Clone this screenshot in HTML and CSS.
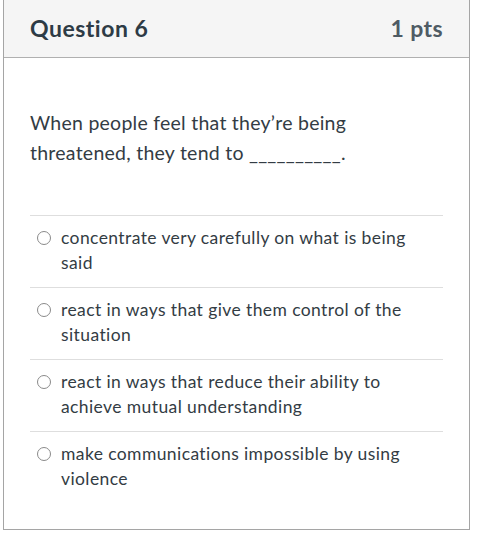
FILE: index.html
```html
<!DOCTYPE html>
<html>
<head>
<meta charset="utf-8">
<link rel="stylesheet" href="styles.css">
</head>
<body>
<div class="card">
  <div class="header">
    <span class="title">Question 6</span>
    <span class="pts">1 pts</span>
  </div>
  <div class="content">
    <p class="question">When people feel that they’re being threatened, they tend to __________.</p>
    <div class="answers">
      <div class="answer"><span class="radio"></span><span class="label">concentrate very carefully on what is being said</span></div>
      <div class="answer"><span class="radio"></span><span class="label">react in ways that give them control of the situation</span></div>
      <div class="answer"><span class="radio"></span><span class="label">react in ways that reduce their ability to achieve mutual understanding</span></div>
      <div class="answer"><span class="radio"></span><span class="label">make communications impossible by using violence</span></div>
    </div>
  </div>
</div>
</body>
</html>
```

FILE: styles.css
```css
html, body {
  margin: 0;
  padding: 0;
  background: #ffffff;
}
body {
  font-family: Lato, "Open Sans", sans-serif;
  color: #2d3b45;
}
.card {
  margin-left: 3px;
  width: 465px;
  border: 1px solid #a5a5a5;
  border-top: none;
  background: #fff;
}
.header {
  height: 58px;
  box-sizing: border-box;
  background: #f5f5f5;
  border-bottom: 1px solid #b0b0b0;
  display: flex;
  align-items: center;
  justify-content: space-between;
  padding: 0 26px 1px;
}
.title {
  font-size: 23px;
  letter-spacing: 0.5px;
  font-weight: 700;
  color: #2d3b45;
}
.pts {
  font-size: 23px;
  letter-spacing: 0.4px;
  font-weight: 700;
  color: #4f5b64;
}
.content {
  padding: 50px 26px 26px;
}
.question {
  margin: 0;
  font-size: 19.5px;
  letter-spacing: 0.25px;
  line-height: 30px;
  padding-right: 80px;
  color: #333c44;
}
.answers {
  margin-top: 47px;
}
.answer {
  border-top: 1px solid #dedede;
  display: flex;
  align-items: flex-start;
  padding: 9px 0 12px 7px;
  font-size: 17.5px;
  letter-spacing: 0.4px;
  line-height: 25px;
  color: #333c44;
}
.radio {
  flex: none;
  width: 14px;
  height: 14px;
  box-sizing: border-box;
  border: 1.5px solid #8a8a8a;
  border-radius: 50%;
  margin-top: 6px;
  margin-right: 10px;
}
.label {
  flex: 1;
  padding-right: 30px;
}
```
